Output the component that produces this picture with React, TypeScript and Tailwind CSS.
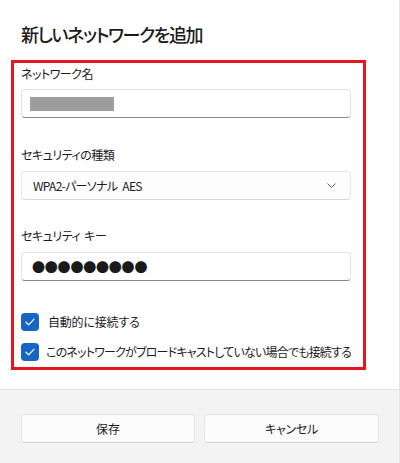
import React from 'react';

const font = "font-['Noto_Sans_CJK_JP','Noto_Sans',sans-serif] [font-feature-settings:'palt']";

const Check: React.FC = () => (
  <span className="w-[18px] h-[18px] rounded-[4px] bg-[#1866c4] flex items-center justify-center shrink-0">
    <svg width="10" height="8" viewBox="0 0 10 8" fill="none">
      <path d="M1 4.2 L3.7 6.8 L9 1.2" stroke="white" strokeWidth="1.2" strokeLinecap="round" strokeLinejoin="round" />
    </svg>
  </span>
);

const App: React.FC = () => {
  return (
    <div className={`w-[400px] h-[463px] bg-white border-r border-[#e6e6e6] flex flex-col text-[#1b1b1b] ${font}`}>
      <div className="h-[60px] pl-[21px] pt-[21px]">
        <h1 className="text-[18px] leading-[26px] font-medium tracking-[-1.4px]">新しいネットワークを追加</h1>
      </div>

      <div className="ml-[11px] w-[355px] h-[310px] border-[3px] border-[#e8151f] pl-[7px] pr-[12px] pt-[1px] flex flex-col text-[12px] tracking-[-0.5px]">
        <div className="h-[20px] leading-[20px]">ネットワーク名</div>
        <div className="mt-[5px] h-[29px] rounded-[4px] border border-[#e3e3e3] border-b-[#8a8a8a] bg-white flex items-center pl-[8px]">
          <div className="w-[84px] h-[14px] bg-[#9d9d9d]" />
        </div>

        <div className="mt-[27px] h-[20px] leading-[20px]">セキュリティの種類</div>
        <div className="mt-[6px] h-[29px] rounded-[4px] border border-[#e5e5e5] border-b-[#d6d6d6] bg-[#fdfdfd] flex items-center justify-between pl-[11px] pr-[14px]">
          <span className="tracking-[-0.7px]">WPA2-パーソナル <span className="ml-[3px]">AES</span></span>
          <svg width="9" height="5" viewBox="0 0 9 5" fill="none">
            <path d="M0.5 0.5 L4.5 4.5 L8.5 0.5" stroke="#5c5c5c" strokeWidth="1" />
          </svg>
        </div>

        <div className="mt-[26px] h-[20px] leading-[20px]">セキュリティ <span className="ml-[2px]">キー</span></div>
        <div className="mt-[6px] h-[29px] rounded-[4px] border border-[#e3e3e3] border-b-[#8a8a8a] bg-white flex items-center pl-[10px]">
          <span className="text-[13px] tracking-[-0.2px] text-[#1a1a1a]">●●●●●●●●●</span>
        </div>

        <label className="mt-[31px] h-[20px] flex items-center gap-[9px]">
          <Check />
          <span className="tracking-[-0.2px]">自動的に接続する</span>
        </label>
        <label className="mt-[10px] h-[20px] flex items-center gap-[7px]">
          <Check />
          <span className="whitespace-nowrap tracking-[-0.8px]">このネットワークがブロードキャストしていない場合でも接続する</span>
        </label>
      </div>

      <div className="mt-[19px] flex-1 bg-[#f3f3f3] border-t border-[#e5e5e5] flex gap-[9px] pl-[21px] pt-[24px] text-[12px]">
        <button className="w-[174px] h-[29px] rounded-[4px] bg-[#fbfbfb] border border-[#e5e5e5] border-b-[#d2d2d2]">保存</button>
        <button className="w-[175px] h-[29px] rounded-[4px] bg-[#fbfbfb] border border-[#e5e5e5] border-b-[#d2d2d2] tracking-[-0.3px]">キャンセル</button>
      </div>
    </div>
  );
};

export default App;
